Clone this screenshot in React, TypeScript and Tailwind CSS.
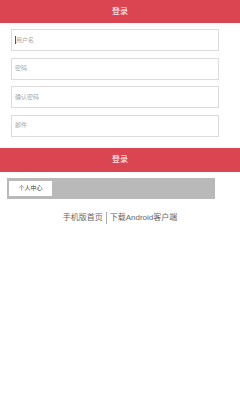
import React from "react";

export default function App() {
  const font = { fontFamily: '"Liberation Sans", "Noto Sans CJK SC", sans-serif' };
  return (
    <div className="w-[240px] h-[400px] bg-white" style={font}>
      <div className="h-[23px] bg-[#db4451] flex items-center justify-center text-white text-[8px]">登录</div>
      <div className="flex flex-col gap-[6.5px] pl-[11px] pt-[6px] w-[219px]">
        {["用户名", "密码", "确认密码", "邮件"].map((p, i) => (
          <div key={p} className="h-[22px] border border-[#dcdcdc] flex items-center pl-[3px] text-[6px] text-[#aaa]">
            {i === 0 && <span className="w-[1px] h-[8px] bg-[#555]" />}
            <span>{p}</span>
          </div>
        ))}
      </div>
      <div className="mt-[11.5px] h-[23.5px] bg-[#db4451] flex items-center justify-center text-white text-[8px]">登录</div>
      <div className="mt-[6px] ml-[7px] w-[208px] h-[21.5px] bg-[#b9b9b9] flex items-center pl-[2px]">
        <div className="w-[43px] h-[15px] bg-white flex items-center justify-center text-[6px] text-[#444]">个人中心</div>
      </div>
      <div className="mt-[13px] flex items-center justify-center text-[8px] text-[#666] leading-[10px]">
        <span>手机版首页</span>
        <span className="w-[1px] h-[12px] bg-[#aaa] mx-[3px]" />
        <span>下载Android客户端</span>
      </div>
    </div>
  );
}
